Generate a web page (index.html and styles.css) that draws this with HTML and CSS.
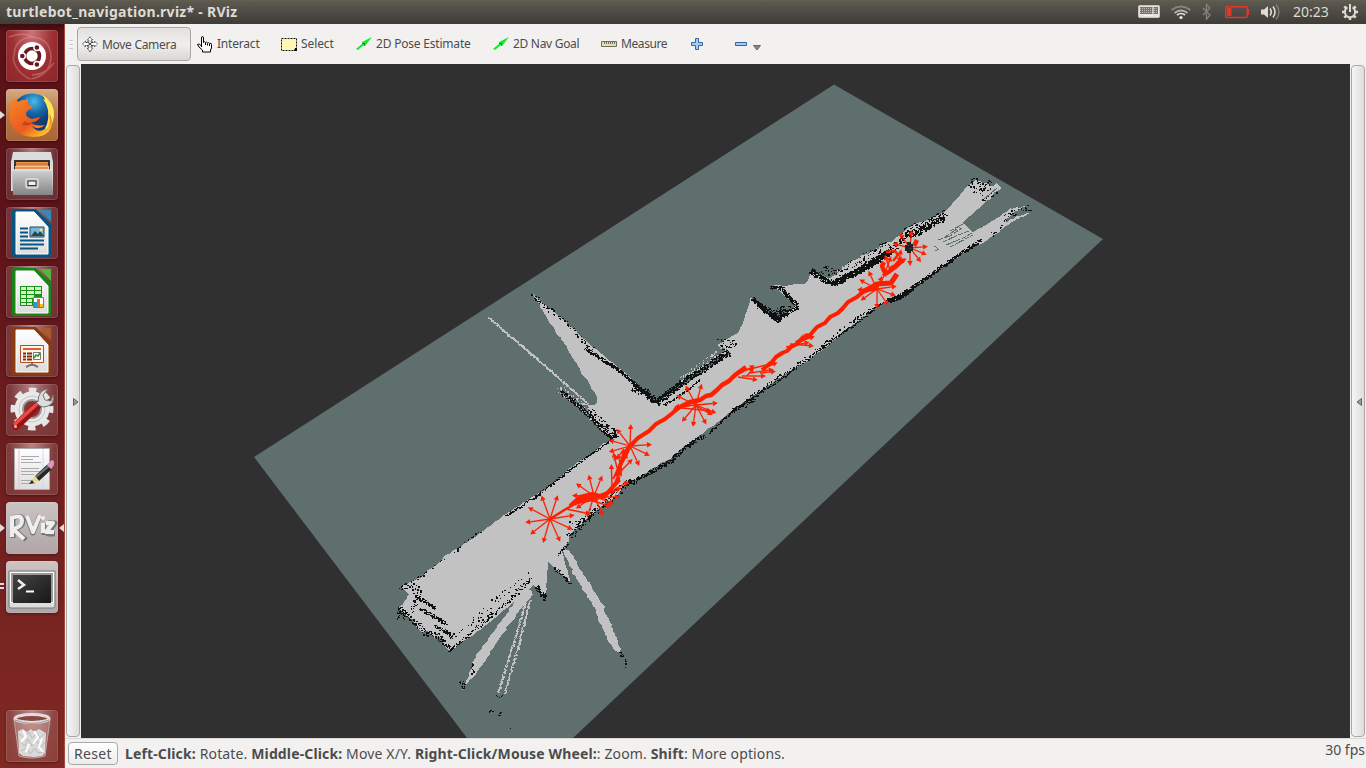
FILE: index.html
```html
<!DOCTYPE html>
<html lang="en">
<head>
<meta charset="utf-8">
<title>turtlebot_navigation.rviz* - RViz</title>
<link rel="stylesheet" href="styles.css">
</head>
<body>
<header class="panel">
  <span class="title">turtlebot_navigation.rviz* - RViz</span>
  <svg class="tray" width="180" height="24" viewBox="1130 0 180 24" fill="none">
    <rect x="1138.500" y="5.500" width="21" height="12" rx="1" fill="#e5e1dc" stroke="#c8c4bd"/><path d="M1140 7h18v7h-18z" fill="#77746e"/><path d="M1140 8.500h18M1140 10.500h18M1140 12.500h18" stroke="#bbb7b0" stroke-dasharray="1 1"/><path d="M1153 7v7M1144 15.500h9" stroke="#f4f1ed"/><path d="M1155 8.500h2" stroke="#58b858"/>
    <g stroke="#888680" stroke-width="2"><path d="M1171.500 10q9.500-7 19 0"/><path d="M1174.500 13q6.500-5 13 0" stroke="#b5b2aa"/></g><path d="M1177 15q4-3 8 0" stroke="#e8e4dc" stroke-width="1.700"/><circle cx="1181" cy="17.500" r="1.600" fill="#eeeae2"/>
    <path d="M1203 8l7 7-3.500 4V4.500l3.500 3.500-7 7" stroke="#85827b" stroke-width="1.300"/>
    <rect x="1225.700" y="6.700" width="21.500" height="10.800" rx="1" stroke="#df382c" stroke-width="1.400"/><path d="M1227 8h4.500v8h-4.500zM1247 9h2v6h-2z" fill="#df382c"/>
    <path d="M1261 9.500h3l4-3.500v12l-4-3.500h-3z" fill="#dfdbd2"/><path d="M1270 8.500q2.500 3.500 0 7M1273 6.500q4 5.500 0 11" stroke="#dfdbd2" stroke-width="1.600"/><path d="M1276 4.500q6 7.500 0 15" stroke="#85827b" stroke-width="1.300"/>
  </svg>
  <span class="clock">20:23</span>
  <svg class="gear" width="18" height="18" viewBox="-9 -9 18 18" fill="none" stroke="#dfdbd2"><path d="M-2.500-4.600A5.200 5.200 0 1 0 2.500-4.600" stroke-width="2"/><path d="M0-8V0" stroke-width="2"/><path d="M-5.500 0h-2.500M5.500 0H8M0 5.500V8M-4-4l-1.700-1.700M4-4l1.700-1.700M-4 4l-1.700 1.700M4 4l1.700 1.700" stroke-width="2.500"/></svg>
</header>
<div class="desktop">
<nav class="launcher">
  <svg class="defs"><defs>
    <linearGradient id="paper" x2="0" y2="1"><stop stop-color="#fff"/><stop offset="1" stop-color="#ddd"/></linearGradient>
    <linearGradient id="metal" x2="0" y2="1"><stop stop-color="#d0d0d0"/><stop offset="1" stop-color="#858585"/></linearGradient>
    <linearGradient id="fox" x2=".8" y2="1"><stop stop-color="#f58a25"/><stop offset=".65" stop-color="#ed5920"/><stop offset="1" stop-color="#ffc928"/></linearGradient>
    <radialGradient id="globe" cx=".55" cy=".2"><stop stop-color="#48bde8"/><stop offset=".55" stop-color="#1767a9"/><stop offset="1" stop-color="#103c77"/></radialGradient>
    <linearGradient id="black" x2="1" y2="1"><stop stop-color="#444"/><stop offset="1" stop-color="#171717"/></linearGradient>
  </defs></svg>
  <div class="tile ubuntu"><svg viewBox="0 0 52 52" fill="none"><g stroke="#e5a0a0" stroke-opacity=".4" stroke-width="1.500"><path d="M8 27Q8 8 26 7q19 1 19 22M45 26q0 19-20 23M7 27q2 15 17 22M3 7q14-6 27 1M26 45q13 0 22-12"/></g><circle cx="26" cy="26" r="14" fill="#fff"/><circle cx="26" cy="26" r="7.500" stroke="#691a20" stroke-width="3.600"/><g fill="#691a20" stroke="#fff" stroke-width="1.400"><circle cx="16.300" cy="26" r="3"/><circle cx="30.900" cy="17.500" r="3"/><circle cx="30.900" cy="34.500" r="3"/></g></svg></div>
  <div class="tile firefox"><i class="left"></i><svg viewBox="0 0 52 52"><circle cx="26" cy="25" r="20.500" fill="url(#globe)"/><path d="M37 6q12 8 11 21T34 46q10-9 8-25-1-6-5-11l2 1z" fill="#ffe45a"/><path d="M8 9q3 1 4 4 5-3 8-2l2-3v7q4 1 5 4-7 2-7 6 0 3 6 5l8-2q-3 6-9 5 5 5 14 3-6 6-13 1 6 9 16 1 3-6 1-14 5 8 2 15-4 9-18 9Q10 47 4 33 1 19 8 9" fill="url(#fox)"/><path d="M18 32q8 5 18-1-5 7-11 4-4 2-9 1" fill="#8c2d18" opacity=".45"/></svg></div>
  <div class="tile clear"><svg viewBox="0 0 52 52"><path d="M7 4h38l2 10v29H5V14z" fill="#dcdcdc"/><path d="M8 12h36v12H8z" fill="#383332"/><path d="M10 14h32v8H10z" fill="#ee9447"/><path d="M9 18h34v4H9z" fill="#f7c28a"/><path d="M10 16h32M9 20h33" stroke="#cd632b"/><path d="M6 22h40l1 25H7z" fill="url(#metal)"/><path d="M6 22h40" stroke="#eee"/><rect x="20" y="31" width="12" height="9" rx="2" fill="#aaa" stroke="#ddd" stroke-width="1.500"/><rect x="22" y="33" width="8" height="4.500" fill="#eee" stroke="#333"/></svg></div>
  <div class="tile clear"><svg viewBox="0 0 52 52"><path d="M6 5q0-3 3-3h21l15 15v31q0 2-3 2H9q-3 0-3-3z" fill="#075583"/><path d="M10 5h18l14 15v27H10z" fill="url(#paper)" stroke="#fff"/><path d="M34 3h11v12z" fill="#3788b6"/><path d="M14 21.500h8m-8 4h8m-8 4h8m-8 4h24m-24 4h24m-24 4h18" stroke="#075583" stroke-width="2"/><path d="M24 20h14v10H24z" fill="#76b8da" stroke="#234b63"/><path d="M25 29l4-5 3 3 2-3 4 5z" fill="#354247"/><circle cx="35" cy="23" r="1.500" fill="#fae463"/></svg></div>
  <div class="tile clear"><svg viewBox="0 0 52 52"><path d="M6 5q0-3 3-3h21l15 15v31q0 2-3 2H9q-3 0-3-3z" fill="#168516"/><path d="M10 5h18l14 15v27H10z" fill="url(#paper)" stroke="#fff"/><path d="M34 3h11v12z" fill="#50b93c"/><path d="M14 20h22v20H14z" fill="#19911b"/><path d="M15 21h5v3h-5zm6 0h7v3h-7zm8 0h6v3h-6zM15 25h5v3h-5zm6 0h7v3h-7zm8 0h6v3h-6zM15 29h5v3h-5zm6 0h7v3h-7zM15 33h5v3h-5zm6 0h5v3h-5zM15 37h5v2h-5zm6 0h5v2h-5z" fill="#d1f7bd"/><path d="M27.500 31.500h10v10h-10z" fill="#fff" stroke="#777"/><path d="M28 36h3v5h-3z" fill="#2c99d2"/><path d="M31 33h3v8h-3z" fill="#e46b22"/><path d="M34 38h3v3h-3z" fill="#f5bd25"/></svg></div>
  <div class="tile clear"><svg viewBox="0 0 52 52"><path d="M6 5q0-3 3-3h21l15 15v31q0 2-3 2H9q-3 0-3-3z" fill="#8b3b0d"/><path d="M10 5h18l14 15v27H10z" fill="url(#paper)" stroke="#fff"/><path d="M34 3h11v12z" fill="#aa5b28"/><path d="M14.500 20.500h23v17h-23z" fill="#fff5ec" stroke="#b54d1d"/><path d="M17 24h18" stroke="#db6027" stroke-width="2"/><path d="M17 28.500h3m1 0h5m-9 3h3m1 0h5m-9 3h3m1 0h5" stroke="#7e2b0d" stroke-width="2"/><path d="M27.500 27.500h7v7h-7z" fill="#fff" stroke="#777"/><path d="M28 33l2-3 2 1 2-3" fill="none" stroke="#219829" stroke-width="1.500"/><path d="M26 38v3m-6 1l6-3 6 3" stroke="#777" stroke-width="2" fill="none"/></svg></div>
  <div class="tile clear"><svg viewBox="0 0 52 52"><circle cx="26" cy="25" r="19" fill="none" stroke="#e4e4e4" stroke-width="5" stroke-dasharray="7.500 7.420" stroke-dashoffset="3.700"/><circle cx="26" cy="25" r="13.500" fill="none" stroke="#e9e9e9" stroke-width="8"/><circle cx="26" cy="25" r="13" fill="none" stroke="#c6c6c6"/><circle cx="26" cy="25" r="9" fill="#8d3233" stroke="#999" stroke-width="2"/><path d="M10 42l22-21" stroke="#971519" stroke-width="8" stroke-linecap="round"/><path d="M9 40l23-21" stroke="#e94c43" stroke-width="3.500" stroke-linecap="round"/><path d="M32 18q0-12 10-13l-5 6 2 5 6 1 2-6q2 8-5 11-4 2-8 0l-4-4" fill="#ddd" stroke="#777"/><circle cx="9.500" cy="42.500" r="1.500" fill="#f4aaa6"/></svg></div>
  <div class="tile clear"><svg viewBox="0 0 52 52"><path d="M8.500 5.500h35v41h-35z" fill="url(#paper)" stroke="#aaa"/><path d="M13 6v40" stroke="#f4bfc0"/><path d="M37 6v40" stroke="#cdddf8"/><path d="M15 13.500h18m-18 3h12m-12 3h20m-20 6h18m-18 3h20m-20 3h13m-13 6h18m-18 3h14" stroke="#aaa"/><path d="M29 33l14-13 4 5-14 13z" fill="#262626"/><path d="M30 34l14-12" stroke="#777" stroke-width="2"/><path d="M29 33l-6 8 10-3" fill="#e8d878"/><path d="M23 41l3-4 2 3z" fill="#222"/><path d="M41 22l4-4q4-2 2 5l-2 3" fill="#e595c3" stroke="#aaa"/></svg></div>
  <div class="tile pale"><i class="left"></i><i class="right"></i><svg viewBox="0 0 52 52" fill="none" stroke-linejoin="round"><g stroke="#777" stroke-width="5"><path d="M7 15v21M7 16q10-4 10 3 0 6-9 8l12 11M21 15l6 16 7-18M38 22v11M42 21h7l-7 11h7"/></g><g stroke="#eee" stroke-width="4"><path d="M6 14v21M6 16q10-4 10 3 0 6-9 8l11 10M21 14l6 16 7-17M37 21v10M40 21h7l-7 9h8"/></g><circle cx="37" cy="16" r="2" fill="#eee"/></svg></div>
  <div class="tile pale"><i class="dots"></i><svg viewBox="0 0 52 52"><path d="M3 10h46v35q0 2-2 2H5q-2 0-2-2z" fill="#ddd" stroke="#777"/><path d="M4.500 11.500h43v30h-43z" fill="#999" stroke="#fff"/><path d="M7 14h38v28H7z" fill="url(#black)"/><path d="M12 19l6 5-6 4" stroke="#eee" stroke-width="2.500" fill="none"/><path d="M20 30.500h8" stroke="#fff" stroke-width="2"/></svg></div>
  <div class="tile clear trash"><svg viewBox="0 0 52 52"><path d="M8 9l5 37q13 4 26 0l5-37" fill="#fff" fill-opacity=".2" stroke="#bba5a3"/><path d="M12 21l5-2 4 3 4-3 3 3 5-3 7 4-1 20-3 3-8 1-11-1-4-3z" fill="#dadada"/><path d="M13 24l5 4 5-6 3 6 5-5 3 5 5-5M13 31l6 5 3-7 4 7 5-5 4 6 4-5M15 41l6-3 3 6 5-6 3 5 6-1" stroke="#bbb" fill="none"/><path d="M17 21l3 5-5 6M28 21l4 6-5 7M23 34l-3 8M36 28l-3 9 4 5" stroke="#fff" fill="none" stroke-width="2"/><ellipse cx="26" cy="8.500" rx="17" ry="4" fill="#8c4541" stroke="#dedede" stroke-width="3"/><path d="M9 10q17 7 34 0" stroke="#999" fill="none"/></svg></div>
</nav>
<main class="app">
  <div class="toolbar">
    <i class="grip"></i>
    <button class="tool active"><svg width="16" height="17" viewBox="0 0 16 17" fill="#fff" stroke="#444" stroke-width="1"><path d="M8 .8L5.300 4h1.500v2.500H3.500V5L.5 8l3 3V9.500h3.300V12H5.300L8 16l2.700-4H9.200V9.500h3.300V11l3-3-3-3v1.500H9.200V4h1.500z" stroke-dasharray="1.500 .5"/><path d="M5 5.500l6 5M11 5.500l-6 5"/></svg><span class="w-camera">Move Camera</span></button>
    <button class="tool interact"><svg width="16" height="17" viewBox="0 0 16 17"><path d="M4.500 11V2q0-1.500 1-1.500T6.500 2v4.500q1-1.500 2 0 1-1 2 .5 1-1 2 .5 2-1 2 1V12l-1 2v2h-8v-2L2 11 .5 8.500Q2 7 4.500 10" fill="#fff" stroke="#000"/><path d="M8.500 7v2m2-1.500v2m2-1.500v2" stroke="#000"/></svg><span class="w-interact">Interact</span></button>
    <button class="tool select"><svg width="16" height="13" viewBox="0 0 16 13"><path d="M.5.500h15v12H.5z" fill="#fff5b5" stroke="#111" stroke-dasharray="2 1"/><path d="M13 13h3v-3h-2z"/></svg><span class="w-select">Select</span></button>
    <button class="tool pose"><svg width="16" height="14" viewBox="0 0 16 14"><path d="M0 12L7 6 6 5 16 0 9 9V7L2 13z" fill="#0eee30"/><path d="M6 6l3 1-1 2" stroke="#087c1c" fill="none"/></svg><span class="w-pose">2D Pose Estimate</span></button>
    <button class="tool nav"><svg width="16" height="14" viewBox="0 0 16 14"><path d="M0 12L7 6 6 5 16 0 9 9V7L2 13z" fill="#0eee30"/><path d="M6 6l3 1-1 2" stroke="#087c1c" fill="none"/></svg><span class="w-nav">2D Nav Goal</span></button>
    <button class="tool measure"><svg width="16" height="6" viewBox="0 0 16 6"><path d="M.5.500h15v5H.5z" fill="#e7dfac" stroke="#716e60"/><path d="M3.500 1v2m2-2v2m2-2v2m2-2v2m2-2v2m2-2v2" stroke="#716e60"/></svg><span class="w-measure">Measure</span></button>
    <svg class="plus" width="12" height="12" viewBox="0 0 12 12"><path d="M4.500.500h3v4h4v3h-4v4h-3v-4h-4v-3h4z" fill="#a9caef" stroke="#3465a4"/></svg>
    <svg class="minus" width="12" height="4" viewBox="0 0 12 4"><path d="M.5.500h11v3H.5z" fill="#a9caef" stroke="#3465a4"/></svg>
    <svg class="more" width="8" height="6" viewBox="0 0 8 6"><path d="M.5.500h7L4 5z" fill="#888" stroke="#666"/></svg>
  </div>
  <div class="work">
    <div class="dock"><svg width="14" height="8" viewBox="0 0 14 8"><path d="M7.500.500v7L12 4z" fill="#999" stroke="#666"/></svg></div>
    <svg class="map" viewBox="81 64 1269 674" width="1269" height="674">
      <path d="M834 84.500L1103 239 573 738H467L254 457z" fill="#5e6f6d"/>
      <g id="floor" fill="#c2c2c2" shape-rendering="crispEdges"></g>
      <g id="walls" fill="#101111" shape-rendering="crispEdges"></g>
      <g id="poses" stroke="#ff1f00" fill="#ff1f00" stroke-linejoin="round"></g>
    </svg>
    <div class="dock"><svg width="14" height="8" viewBox="0 0 14 8"><path d="M10.500.500v7L6 4z" fill="#999" stroke="#666"/></svg></div>
  </div>
  <footer class="status"><button class="reset">Reset</button><span class="help"><b>Left-Click:</b> Rotate. <b>Middle-Click:</b> Move X/Y. <b>Right-Click/Mouse Wheel:</b>: Zoom. <b>Shift</b>: More options.</span><span class="fps">30 fps</span></footer>
</main>
</div>
<script src="map.js"></script>
</body>
</html>
```
FILE: styles.css
```css
*{box-sizing:border-box}
body{margin:0;width:1366px;height:768px;overflow:hidden;background:#f2f1f0;font:12px "Noto Sans","Open Sans",sans-serif;color:#4c4c4c}
svg{display:block;flex:none}
button{font:inherit;color:inherit;margin:0;border:0;background:none;padding:0}
.panel{height:24px;display:flex;align-items:center;background:linear-gradient(#62604e 0,#5b5850 2px,#3d3c37);color:#dfdbd2;padding-left:6px;padding-right:7px}
.title{font-weight:700;font-size:14px;letter-spacing:.27px;line-height:24px;white-space:nowrap}
.tray{margin-left:auto;margin-right:-17px}
.clock{font-size:14px;width:36px;white-space:nowrap;line-height:24px;height:24px}
.gear{margin-left:12px}
.desktop{display:flex;height:744px}
.launcher{width:65px;background:linear-gradient(#3d0b0f 0,#5a1216 8px,#5c1319 25%,#71201f 65%,#802922);border-right:1px solid #a04b3e;padding:6px 0 6px 6px;display:flex;flex-direction:column;gap:7px;position:relative}
.defs{position:absolute;width:0;height:0}
.tile{width:52px;height:52px;border-radius:4px;position:relative;flex:none;box-shadow:inset 0 0 0 1px rgba(255,255,255,.12),0 1px 3px rgba(0,0,0,.35)}
.tile>svg{width:52px;height:52px}
.clear{background:radial-gradient(ellipse at 50% 0,rgba(255,235,235,.5),rgba(255,255,255,.14) 60%,rgba(255,255,255,.1))}
.ubuntu{background:radial-gradient(ellipse at 50% 5%,#cb7275,#9c3034 55%,#8d2427)}
.firefox{background:linear-gradient(#d4ac84,#b77743 50%,#a96536)}
.pale{background:linear-gradient(#ccc3c3,#afa5a6)}
.trash{margin-top:auto}
.left,.right,.dots{position:absolute;width:0;height:0;border:4px solid transparent}
.left{left:-6px;top:22px;border-left:5px solid #e0dcdc;border-right:0}
.right{right:-6px;top:22px;border-right:5px solid #e0dcdc;border-left:0}
.dots{left:-6px;top:22px;width:4px;height:6px;border:solid #ddd;border-width:2px 0}
.app{width:1301px;display:flex;flex-direction:column}
.toolbar{height:40px;display:flex;align-items:center;position:relative}
.grip{width:4px;height:9px;margin-left:4px;background:repeating-linear-gradient(#ccc 0 1px,#fff 1px 2px,transparent 2px 4px)}
.tool{display:flex;align-items:center;gap:4px;height:34px;white-space:nowrap;text-align:left}
.tool:not(.active) span{padding-bottom:2px}
.active{width:114px;margin-left:4px;padding-left:4px;border:1px solid #a9a6a3;border-radius:4px;background:linear-gradient(#e3e1df,#f0efee 50%,#d9d7d4)}
.w-camera{letter-spacing:-.3px}
.w-interact{letter-spacing:-.2px}
.w-pose{letter-spacing:-.2px}
.w-nav{letter-spacing:-.3px}
.w-select{letter-spacing:-.1px}
.w-measure{letter-spacing:-.4px}
.interact{margin-left:6px;width:63px}
.select{margin-left:21px;width:53px}
.pose{margin-left:22px;width:115px}
.nav{margin-left:22px;width:86px}
.measure{margin-left:22px;width:67px}
.plus{margin-left:23px}
.minus{margin-left:32px}
.more{margin-left:6px;margin-top:7px}
.work{height:674px;display:flex}
.dock{width:14px;height:672px;margin:1px;display:flex;align-items:center;flex:none;border:1px solid #aaa7a4;border-radius:4px;background:linear-gradient(90deg,#f6f5f4,#dfdddb)}
.dock svg{margin-left:-1px;margin-top:2px}
.map{background:#303030}
.status{height:30px;display:flex;align-items:flex-start;border-top:1px solid #dcdad8;font-size:14px;white-space:nowrap}
.reset{width:50px;height:23px;margin:3px 7px 0 3px;border:1px solid #aaa;border-radius:4px;background:linear-gradient(#fff,#ececeb);line-height:20px;letter-spacing:.3px}
.help{line-height:30px;letter-spacing:.14px}
.fps{margin-left:auto;margin-right:1px;line-height:22px}
```
FILE: map.js
```js
let seed = 71;
const rnd = () => (seed = (seed * 16807) % 2147483647) / 2147483647;
const pts = s => s.trim().split(/\s+/).map(p => p.split(',').map(Number));
const add = (id, html) => document.getElementById(id).insertAdjacentHTML('beforeend', html);

function walk(points, step, visit) {
  for (let i = 1; i < points.length; i++) {
    const [a, b] = points[i - 1], [c, d] = points[i];
    const n = Math.max(1, Math.round(Math.hypot(c - a, d - b) / step));
    for (let k = 0; k < n; k++) visit(a + (c - a) * k / n, b + (d - b) * k / n, Math.atan2(d - b, c - a));
  }
}
function area(s, jag = 1.2) {
  const out = [], p = pts(s);
  p.push(p[0]);
  walk(p, 2.5, (x, y) => out.push(Math.round(x + (rnd() - .5) * jag) + ',' + Math.round(y + (rnd() - .5) * jag)));
  add('floor', `<polygon points="${out.join(' ')}"/>`);
}
function specks(s, width, density, fill = '#101111') {
  let d = '';
  walk(pts(s), 1, (x, y, t) => {
    for (let i = 0; i < density; i++) if (rnd() < density - i) {
      const o = (rnd() - .5) * width;
      const w = rnd() < .4 ? 2 : 1, h = rnd() < .25 ? 2 : 1;
      d += `M${Math.round(x - Math.sin(t) * o)} ${Math.round(y + Math.cos(t) * o)}h${w}v${h}h-${w}z`;
    }
  });
  add('walls', `<path fill="${fill}" d="${d}"/>`);
}
const GREY = '#c2c2c2', TEAL = '#5e6f6d';

area('470,540 456,549 445,556 436,565 428,570 420,577 410,582 400,587 409,594 403,604 397,608 404,614 409,620 413,619 417,628 422,632 427,631 434,638 440,637 447,650 451,650 465,640 480,630 500,613 520,597 533,585 546,599 548,562 556,570 571,583 562,552 569,541 569,535 586,520 600,507 615,497 625,485 640,477 655,467 672,457 685,446 700,435 715,424 735,408 757,393 775,380 810,359 830,343 850,327 875,308 887,301 900,299 912,287 930,276 958,256 985,241 1000,231 1006,221 1015,211 1026,206 1010,209 992,221 973,232 962,223 974,212 987,201 999,188 985,184 975,180 966,188 945,212 933,217 920,222 908,228 893,240 875,250 850,262 835,275 828,279 811,271 806,284 772,286 784,296 797,305 776,320 751,298 744,320 738,333 725,340 717,345 728,350 730,353 700,374 678,389 656,403 643,393 630,377 610,361 590,345 575,330 555,313 540,301 533,294 548,320 565,345 580,370 590,385 597,397 596,404 588,406 590,420 602,431 612,438 590,454 570,468 545,490 525,501 502,517 485,529');
area('528,588 514,603 490,636 473,661 470,674 462,689 478,671 488,656 507,628 520,610 533,594', 2);
area('562,549 575,576 594,608 608,640 614,650 622,654 615,634 603,606 589,583 568,549', 2);
area('1032,212 1014,221 1000,230 1000,226 1015,217', 1);
area('1001,188 984,200 980,200 990,190 996,183 1000,186', 1);

// Single-beam scan lines
specks('488,317 530,353 562,381 589,405', 1.5, 1.8, GREY);
specks('526,597 515,637 497,693', 1.6, 1.4, GREY);
specks('529,600 518,645 504,694', 1.6, 1.4, GREY);
specks('558,387 588,410 600,425', 8, 1.5, GREY);

// North walls
specks('534,297 570,326 593,350', 5, .8);
specks('585,348 620,371 655,402', 3, 2.8);
specks('632,388 645,391 656,402', 7, 4);
specks('656,402 682,382 729,351', 6, 5);
specks('680,379 702,364 725,347', 6, .9, GREY);
specks('663,405 682,393 700,379', 2, 1);
specks('717,342 735,343 720,347', 7, .7);
specks('752,298 776,319', 4, 4.5);
specks('757,304 774,314 785,307 776,319', 7, 1.8);
specks('770,287 780,287 797,306 775,320', 4, 2.4);
specks('785,293 791,307 783,312', 5, .6);
specks('811,270 822,279 835,283', 5, 4.5);
specks('820,269 838,273 863,258 889,243', 9, 1.2);
specks('837,273 864,257 892,243', 7, 1.2, GREY);
specks('833,283 862,268 890,251', 6, 8);
specks('890,249 897,244 907,229 930,221 945,212', 7, 1.8);
specks('905,234 914,234 933,223 944,217', 5, 3.5);
specks('970,181 978,185 992,186', 11, 1.5);
specks('973,188 985,191', 9, .9);
specks('983,200 999,189', 3, .6);
specks('560,391 580,407 611,438', 4, 2.6);
specks('588,410 600,421 615,433', 7, 1.7);
specks('611,438 614,433 617,437', 2, 2);
specks('611,440 580,461 545,489 505,516', 2, 1);
specks('480,531 456,549 428,570 412,581', 2, .2);

// South walls
specks('1030,207 1007,215', 5, .6);
specks('1014,210 1002,219', 7, .8);
specks('1002,225 990,235', 4, .7);
specks('980,240 951,259 912,287 889,301', 3, 2.5);
specks('911,288 900,297 885,300', 4, 3);
specks('883,301 855,323 830,341 780,379 735,408 708,433', 2, 1);
specks('870,309 850,322 815,350 776,378 745,400', 2, .45);
specks('757,396 744,405 730,411', 4, 1.5);
specks('704,435 690,443 668,462 625,485', 4, 2.3);
specks('630,480 611,497 586,518 568,537', 7, 1.5);
specks('568,543 557,555', 2, 1);
specks('572,525 580,519 594,512', 11, .8);
specks('553,568 560,572 571,585', 3, 1.2);
specks('536,586 546,599', 5, 3.5);
specks('531,578 500,608 450,650', 3, .9);
specks('531,574 500,598 460,634', 10, .45);
specks('450,650 437,635 425,632 410,617 397,608', 5, 1.7);
specks('399,587 409,584 417,589 416,598 410,612', 7, 1.1);
specks('415,595 435,608', 3, 2);
specks('420,608 445,623', 3, 2.5);
specks('434,625 453,636', 3, 2);
specks('445,620 453,640', 8, .3);
specks('400,607 396,619', 3, 1);
specks('405,610 404,620', 2, .8);
specks('460,681 465,688', 5, 1.4);
specks('472,663 472,674', 3, .9);
specks('496,696 503,696', 3, .8);
specks('489,711 493,711', 3, 1.4);
specks('498,715 501,711', 3, 1.2);
specks('510,728 511,729', 1, 1);
specks('619,653 624,656', 3, 1);
specks('625,658 625,669', 1, .7);
specks('528,292 534,295', 1, .4);
add('walls', `<path stroke="${TEAL}" fill="none" stroke-dasharray="5 1 9 2" d="M938 240l12-4 12-8M943 242l15-7 11-4M945 237l15-10M946 245l17-7 9-5M950 247l23-12M934 246l5 3-4 2M950 231l13-7"/>`);
add('walls', `<path fill="none" stroke="${TEAL}" d="M984 199l13-11"/>`);

function arrow(x, y, angle, length, w = 1) {
  const ex = x + Math.cos(angle) * length, ey = y + Math.sin(angle) * length;
  const bx = ex - Math.cos(angle) * 5, by = ey - Math.sin(angle) * 5;
  const px = -Math.sin(angle) * 2.7, py = Math.cos(angle) * 2.7;
  add('poses', `<path stroke-width="${w}" d="M${x} ${y}L${bx} ${by}"/><path stroke="none" d="M${ex} ${ey}L${bx + px} ${by + py}L${bx - px} ${by - py}z"/>`);
}
const star = (x, y, r, angles) => angles.forEach(a => arrow(x, y, a * Math.PI / 180, r, 1.3));
star(550, 519, 25, [-72, -110, -152, 172, 142, 106, 66, 25, -9]);
star(594, 496, 22, [-68, -104, -145, -179, 145, 108, 65, 22, -12]);
star(630, 446, 22, [-88, -128, -164, 164, 140, 65, 26, -4]);
star(696, 405, 22, [-75, -118, -154, 175, 130, 98, 62, 22, -5]);
star(877, 289, 20, [-62, -115, -152, 178, 145, 90, 55, 20, -8]);
star(910, 248, 18, [-85, -125, -165, 90, 52, 22, -5]);
const trail = (s, w) => add('poses', `<polyline points="${s}" fill="none" stroke-width="${w}"/>`);
trail('550,519 566,509 578,502 594,498 608,492 620,480', 2.5);
trail('570,506 580,497 592,494 604,497', 4);
trail('578,501 591,496 604,497 610,490 618,481', 4);
trail('616,476 621,463 625,453 630,446 638,438 649,431 656,424 665,419 680,407', 4);
trail('613,479 619,468 626,456 631,446', 2);
trail('680,407 690,402 700,400 706,396 711,395 717,390 722,385 729,381 735,375 746,367', 4.5);
trail('762,370 772,362 776,357 782,353 787,351 791,347 797,344 804,336', 4);
trail('796,343 810,335 817,327 825,323 830,317 838,313 843,308 848,302 857,297 864,291 877,288', 4);
trail('860,293 872,287 877,284 891,283 897,274', 5);
trail('884,262 882,266 884,271 887,273 894,268 903,260', 4.5);
trail('886,252 895,251 898,255 893,261', 2.5);
trail('914,246 917,240', 4.5);
const bursts = [[739,374,-.5,18],[742,376,0,24],[738,377,.15,20],[750,373,-.15,24],[747,376,-.9,11],[760,373,-.1,16],[746,370,-.25,28],[762,369,-.4,17],[790,344,.08,24],[796,343,-.35,20],[798,342,-.7,14],[786,347,-.2,24],[622,471,-1.8,18],[612,490,-1.2,23],[611,490,-1.05,22],[608,493,-.5,24],[600,497,0,20],[590,500,.3,22],[605,496,-.9,25],[600,497,-.4,23],[618,472,-1.1,21],[617,468,-1.8,16],[620,470,-1.4,22],[612,486,-1.6,22],[620,472,-.8,18],[877,289,-1.2,14],[883,276,-.7,18],[890,270,-1.9,16],[889,268,-.5,20],[884,275,-1.2,20],[898,267,-1.4,18],[890,270,-.85,18],[590,498,2.8,20],[566,509,.2,25],[575,504,-.2,25],[691,405,2.9,19],[682,408,.1,30],[696,406,.5,19]];
bursts.forEach(([x, y, a, r]) => arrow(x, y, a, r, 1.4));
add('poses', '<path stroke="none" fill="#202323" d="M907 242h4v2h2v7h-2v2h-4v-2h-2v-6h2z"/><path stroke="none" fill="#555" d="M908 245h1v1h-1zm2 3h1v1h-1z"/>');
```
